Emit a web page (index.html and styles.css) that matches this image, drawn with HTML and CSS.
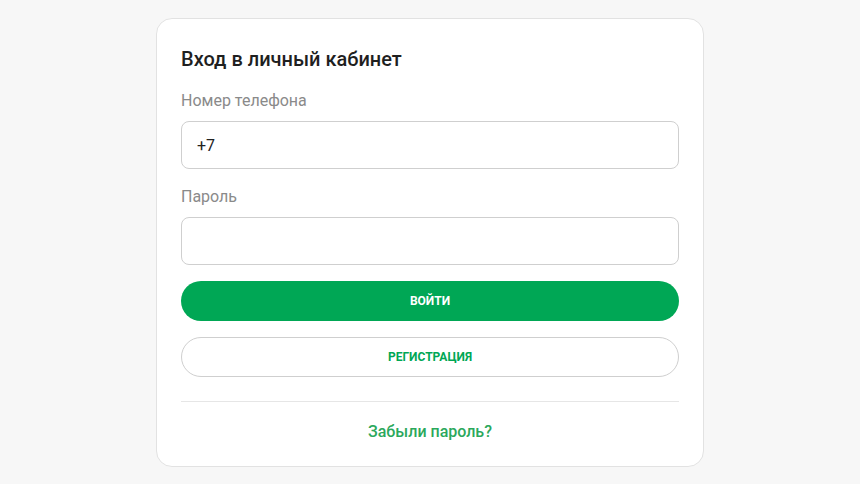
FILE: index.html
```html
<!DOCTYPE html>
<html lang="ru">
<head>
<meta charset="utf-8">
<title>Вход в личный кабинет</title>
<link rel="stylesheet" href="styles.css">
</head>
<body>
<div class="page">
  <form class="card">
    <h1 class="title">Вход в личный кабинет</h1>
    <label class="field">
      <span class="label">Номер телефона</span>
      <input class="input" type="text" value="+7">
    </label>
    <label class="field">
      <span class="label">Пароль</span>
      <input class="input" type="password">
    </label>
    <button class="btn btn-primary" type="button">ВОЙТИ</button>
    <button class="btn btn-outline" type="button">РЕГИСТРАЦИЯ</button>
    <div class="divider"></div>
    <a class="link" href="#">Забыли пароль?</a>
  </form>
</div>
</body>
</html>
```

FILE: styles.css
```css
* { box-sizing: border-box; }
html, body { margin: 0; padding: 0; }
body {
  background: #f7f7f7;
  font-family: Roboto, "Liberation Sans", Arial, sans-serif;
  color: #222;
}
.page {
  display: flex;
  justify-content: center;
  padding-top: 18px;
}
.card {
  width: 548px;
  background: #fff;
  border: 1px solid #e2e2e2;
  border-radius: 16px;
  padding: 26px 24px 22px;
  display: flex;
  flex-direction: column;
}
.title {
  margin: 0 0 16px;
  font-size: 20px;
  line-height: 28px;
  font-weight: 500;
  color: #1f1f1f;
}
.field {
  display: flex;
  flex-direction: column;
  margin-bottom: 16px;
}
.label {
  font-size: 16px;
  line-height: 24px;
  color: #8a8a8a;
  margin-bottom: 8px;
}
.input {
  height: 48px;
  border: 1px solid #cfcfcf;
  border-radius: 8px;
  padding: 0 15px;
  font-family: inherit;
  font-size: 16px;
  color: #222;
  background: #fff;
  outline: none;
}
.btn {
  height: 40px;
  border-radius: 20px;
  font-family: inherit;
  font-size: 12px;
  font-weight: 700;
  cursor: pointer;
  padding: 0;
}
.btn-primary {
  background: #00a755;
  border: none;
  color: #fff;
}
.btn-outline {
  background: #fff;
  border: 1px solid #cfcfcf;
  color: #00a755;
  margin-top: 16px;
}
.divider {
  height: 1px;
  background: #e6e6e6;
  margin-top: 24px;
}
.link {
  margin-top: 18px;
  text-align: center;
  font-size: 16px;
  line-height: 24px;
  font-weight: 500;
  color: #2ba85c;
  text-decoration: none;
}
```
